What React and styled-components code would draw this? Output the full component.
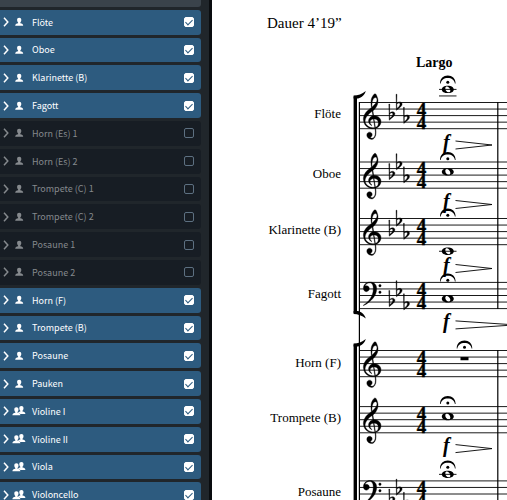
import React, { useState } from "react";
import styled, { createGlobalStyle } from "styled-components";

const PLAYERS = [
    { name: "Flöte", on: true },
    { name: "Oboe", on: true },
    { name: "Klarinette (B)", on: true },
    { name: "Fagott", on: true },
    { name: "Horn (Es) 1", on: false },
    { name: "Horn (Es) 2", on: false },
    { name: "Trompete (C) 1", on: false },
    { name: "Trompete (C) 2", on: false },
    { name: "Posaune 1", on: false },
    { name: "Posaune 2", on: false },
    { name: "Horn (F)", on: true },
    { name: "Trompete (B)", on: true },
    { name: "Posaune", on: true },
    { name: "Pauken", on: true },
    { name: "Violine I", on: true, section: true },
    { name: "Violine II", on: true, section: true },
    { name: "Viola", on: true, section: true },
    { name: "Violoncello", on: true, section: true },
];

// distance between two staff lines
const S = 6.55;

// top: first staff line, note: steps below it in staff spaces, space: room above the name
const STAVES = [
    { name: "Flöte", space: 31, top: 29.5, clef: "g", flats: true, note: -2, ledgers: [-2, -1], fermata: -27, dyn: 42.5 },
    { name: "Oboe", space: 40, top: 89, clef: "g", flats: true, note: 1.5, fermata: -10, dyn: 42.5 },
    { name: "Klarinette (B)", space: 36, top: 145.5, clef: "g", flats: true, note: 5, ledgers: [5], fermata: -10, dyn: 50 },
    { name: "Fagott", space: 44, top: 209.4, clef: "f", flats: true, note: 2.5, fermata: -9, dyn: 42.5, long: true },
    { name: "Horn (F)", space: 49, top: 277.5, clef: "g", rest: true, fermata: -10 },
    { name: "Trompete (B)", space: 35, top: 333.6, clef: "g", note: 1.5, fermata: -10.5, dyn: 42 },
    { name: "Posaune", space: 54, top: 407.9, clef: "f", flats: true, note: -1, ledgers: [-1], fermata: -20.5 },
];

const G_CLEF =
    "M441 -245c-23 -4 -48 -6 -76 -6c-59 0 -102 7 -130 20c-88 42 -150 93 -187 154c-26 44 -43 103 -48 176c-1 6 -1 13 -1 19c0 54 15 111 45 170c29 57 65 106 110 148s96 85 153 127c-3 16 -8 46 -13 92c-4 43 -5 73 -5 89c0 117 16 172 69 257c34 54 64 82 89 82c21 0 43 -30 69 -92s39 -115 41 -159v-15c0 -109 -21 -162 -67 -241c-20 -33 -61 -84 -125 -146L393 246C405 248 417 249 430 249C500 249 562 220 607 170C650 125 671 75 671 20C671 -100 590 -205 466 -238C474 -286 481 -333 483 -368C483 -458 470 -530 430 -590C402 -632 365 -658 323 -658C233 -658 130 -598 130 -493C130 -428 180 -381 235 -381C293 -381 335 -426 335 -481C335 -526 305 -566 260 -581C280 -603 305 -616 340 -616C415 -606 458 -501 458 -391C458 -356 452 -311 441 -245Z" +
    "M461 939c-95 0 -135 -175 -135 -286c0 -24 2 -48 5 -71c50 39 92 82 127 128c40 53 60 100 60 140v8c-4 53 -22 81 -55 81h-2z" +
    "M406 119l54 -326c73 25 110 78 110 161c0 7 0 15 -1 23c-7 95 -57 142 -151 142h-12z" +
    "M382 117c-72 -2 -128 -47 -128 -120v-7c2 -46 43 -99 75 -115c-3 -2 -7 -5 -10 -10c-70 33 -116 88 -123 172v11c0 68 44 126 88 159c23 17 49 29 78 36l-29 170c-21 -13 -52 -37 -92 -73c-50 -44 -86 -84 -109 -119c-45 -69 -67 -130 -67 -182v-5c5 -68 35 -127 93 -176s125 -73 203 -73c25 0 50 3 75 9c-19 111 -36 221 -54 323z";

const F_CLEF =
    "M252 262C400 262 507 170 507 10C507 -260 280 -500 12 -632C6 -635 -8 -630 -5 -618C190 -500 378 -280 378 0C378 140 335 232 240 232C150 232 75 180 60 100C80 115 100 120 118 120C180 120 226 72 226 15C226 -50 175 -103 110 -103C40 -103 0 -45 0 25C0 160 110 262 252 262Z" +
    "M585 125a47 47 0 1 0 94 0a47 47 0 1 0 -94 0zM585 -125a47 47 0 1 0 94 0a47 47 0 1 0 -94 0z";

const FLAT =
    "M-6 439H28L22 95C60 130 100 148 140 148C190 148 226 112 226 62C226 -15 110 -90 8 -175ZM26 55C45 85 72 104 102 104C130 104 146 85 146 55C146 0 85 -60 27 -105Z";

const Glyph = ({ d, x, y }) => (
    <path
        d={d}
        fillRule="evenodd"
        stroke="#000"
        strokeWidth="14"
        transform={`translate(${x} ${y}) scale(${S / 250} ${-S / 250})`}
    />
);

const Fermata = ({ x, y }) => (
    <g transform={`translate(${x} ${y})`}>
        <path d="M-7.8 8C-7.8 2.8 -4.3 0 0 0S7.8 2.8 7.8 8H7.1C6.6 4.4 3.8 2.4 0 2.4S-6.6 4.4 -7.1 8Z" />
        <circle cx="0" cy="6.8" r="1.5" />
    </g>
);

const WholeNote = ({ x, y }) => (
    <path
        fillRule="evenodd"
        transform={`translate(${x} ${y})`}
        d="M-6 0C-6 -2.2 -3.4 -3.7 0 -3.7S6 -2.2 6 0S3.4 3.7 0 3.7S-6 2.2 -6 0ZM-2.5 -1.2C-2.7 .9 -.9 2.9 .9 2.9C2.1 2.9 2.7 2 2.5 .8C2.2 -1 .6 -2.9 -1 -2.9C-1.9 -2.9 -2.4 -2.2 -2.5 -1.2Z"
    />
);

const Staff = ({ staff }) => {
    const { top, clef, flats, note, ledgers = [], rest, fermata, dyn, long } = staff;
    const shift = clef === "f" ? S : 0;
    return (
        <g>
            {[0, 1, 2, 3, 4].map((i) => (
                <StaffLine key={i} x1="14" x2="100%" y1={top + i * S} y2={top + i * S} />
            ))}
            {clef === "g" ? <Glyph d={G_CLEF} x={18.4} y={top + 3 * S} /> : <Glyph d={F_CLEF} x={18.4} y={top + S} />}
            {flats && (
                <>
                    <Glyph d={FLAT} x={44} y={top + 2 * S + shift} />
                    <Glyph d={FLAT} x={51.2} y={top + 0.5 * S + shift} />
                    <Glyph d={FLAT} x={58.6} y={top + 2.5 * S + shift} />
                </>
            )}
            <Meter x="76.5" y={top + 2 * S}>4</Meter>
            <Meter x="76.5" y={top + 4 * S}>4</Meter>
            {ledgers.map((l) => (
                <StaffLine key={l} x1="94" x2="111.5" y1={top + l * S} y2={top + l * S} />
            ))}
            {rest ? (
                <rect x="115.5" y={top + S} width="8" height="3.2" />
            ) : (
                <WholeNote x={102.8} y={top + note * S} />
            )}
            <Fermata x={rest ? 119.5 : 102.8} y={top + fermata} />
            {dyn && (
                <>
                    <Dynamic x="98" y={top + dyn + 3.5}>f</Dynamic>
                    <Hairpin d={`M110.5 ${top + dyn - 4}L${long ? 170 : 147} ${top + dyn}L110.5 ${top + dyn + 4}`} />
                </>
            )}
        </g>
    );
};

const Bracket = ({ from, to }) => (
    <g>
        <rect x="8.6" y={from} width="3.4" height={to - from} />
        <path d={`M8.6 ${from + 2}V${from - 1}C13 ${from - 1} 17 ${from - 2.5} 20.8 ${from - 5.5}C19 ${from} 15 ${from + 2} 12 ${from + 2}Z`} />
        <path d={`M8.6 ${to - 2}V${to + 1}C13 ${to + 1} 17 ${to + 2.5} 20.8 ${to + 5.5}C19 ${to} 15 ${to - 2} 12 ${to - 2}Z`} />
    </g>
);

const PersonShape = () => (
    <path d="M4 0C5.4 0 6.1 .9 6.1 2.2C6.1 3.3 5.6 4.1 5.1 4.7V5.4C6.8 5.9 8 6.2 8 8H0C0 6.2 1.2 5.9 2.9 5.4V4.7C2.4 4.1 1.9 3.3 1.9 2.2C1.9 .9 2.6 0 4 0Z" />
);

const PlayerIcon = ({ section }) =>
    section ? (
        <svg width="14" height="10" viewBox="0 0 14 10" fill="currentColor" aria-hidden="true">
            <g transform="translate(5.4 0)"><PersonShape /></g>
            <g transform="translate(.4 1.3)" stroke="#2d5b7f" strokeWidth=".6" paintOrder="stroke"><PersonShape /></g>
        </svg>
    ) : (
        <svg width="14" height="10" viewBox="0 0 14 10" fill="currentColor" aria-hidden="true">
            <g transform="translate(3.2 .8)"><PersonShape /></g>
        </svg>
    );

const Player = ({ player, id }) => {
    const [on, setOn] = useState(player.on);
    return (
        <PlayerRow $on={on}>
            <ExpandButton type="button" aria-label={player.name}>
                <svg width="6" height="10" viewBox="0 0 6 10" fill="none" stroke="currentColor" strokeWidth="1.5">
                    <path d="M1 .8L4.8 5L1 9.2" />
                </svg>
            </ExpandButton>
            <PlayerIcon section={player.section} />
            <PlayerName htmlFor={id}>{player.name}</PlayerName>
            <PlayerCheck id={id} type="checkbox" checked={on} onChange={() => setOn(!on)} />
        </PlayerRow>
    );
};

const App = () => {
    return (
        <Page>
            <GlobalStyle />
            <Sidebar>
                <PlayerList>
                    <ListHead />
                    {PLAYERS.map((player, i) => (
                        <Player key={player.name} player={player} id={`player-${i}`} />
                    ))}
                </PlayerList>
            </Sidebar>
            <Score>
                <Duration>Dauer 4’19”</Duration>
                <Tempo>Largo</Tempo>
                <System>
                    <Names>
                        {STAVES.map((staff) => (
                            <StaffName key={staff.name} $space={staff.space}>{staff.name}</StaffName>
                        ))}
                    </Names>
                    <Notation>
                        <Bracket from={23.5} to={240} />
                        <Bracket from={271.5} to={480} />
                        <BarLine x1="14.4" x2="14.4" y1="29" y2="480" />
                        <BarLine x1="152.8" x2="152.8" y1="29" y2="236" />
                        <BarLine x1="152.8" x2="152.8" y1="277" y2="480" />
                        {STAVES.map((staff) => (
                            <Staff key={staff.name} staff={staff} />
                        ))}
                    </Notation>
                </System>
            </Score>
        </Page>
    );
};

export default App;


const GlobalStyle = createGlobalStyle`
    * {
        box-sizing: border-box;
    }
    body {
        margin: 0;
        background: #fff;
    }
`;

const Page = styled.div`
    display: flex;
    height: 100vh;
    overflow: hidden;
`;

/* player list */
const Sidebar = styled.aside`
    display: flex;
    flex: none;
    width: 212px;
    padding-right: 8px;
    background: #20262b;
    border-right: 3px solid #090c0f;
`;

/* scrolled a little, so both ends run out of the window */
const PlayerList = styled.ul`
    display: flex;
    flex-direction: column;
    flex: 1;
    gap: 3px;
    list-style: none;
    margin: -18px 0 -7px;
    padding: 0;
`;

const ListHead = styled.li`
    flex: 1;
    border-radius: 0 3px 3px 0;
    background: #3a434b;
`;

const PlayerRow = styled.li`
    display: flex;
    align-items: center;
    flex: 1;
    min-height: 24px;
    padding: 0 7px 0 3px;
    border-radius: 0 3px 3px 0;
    background: ${(props) => (props.$on ? "#2d5b7f" : "#171d24")};
    color: ${(props) => (props.$on ? "#fff" : "#85898d")};
`;

const ExpandButton = styled.button`
    display: flex;
    margin-right: 3px;
    padding: 0;
    border: none;
    background: none;
    color: inherit;
    cursor: pointer;
`;

const PlayerName = styled.label`
    flex: 1;
    margin-left: 6px;
    padding-top: 1px;
    font-family: "Noto Sans CJK JP", "Noto Sans", sans-serif;
    font-size: 9px;
    line-height: 16px;
    white-space: nowrap;
`;

const PlayerCheck = styled.input`
    appearance: none;
    display: flex;
    justify-content: center;
    width: 10px;
    height: 10px;
    margin: 0;
    border: 1px solid #5d7081;
    border-radius: 2px;

    &:checked {
        border-color: #fff;
        background: #fff;
    }
    &:checked::after {
        content: "";
        width: 3px;
        height: 6px;
        border: solid #2d5b7f;
        border-width: 0 1px 1px 0;
        transform: rotate(45deg);
    }
`;

/* score page */
const Score = styled.main`
    flex: 1;
    min-width: 0;
    padding-top: 13px;
    background: #fff;
    color: #000;
    font-family: "Liberation Serif", "Times New Roman", serif;
`;

const Duration = styled.p`
    margin: 0 0 20px 55px;
    font-size: 15px;
    line-height: 20px;
`;

const Tempo = styled.h2`
    margin: 0 0 0 204px;
    font-size: 14px;
    line-height: 20px;
`;

const System = styled.section`
    display: grid;
    grid-template-columns: 133px 1fr;
`;

const Names = styled.div`
    padding-right: 4px;
    text-align: right;
`;

const StaffName = styled.div`
    margin-top: ${(props) => props.$space}px;
    font-size: 13px;
    line-height: 20px;
`;

const Notation = styled.svg`
    width: 100%;
    height: 480px;
`;

const StaffLine = styled.line`
    stroke: #000;
    stroke-width: 0.9;
`;

const BarLine = styled.line`
    stroke: #000;
    stroke-width: 1.2;
`;

const Meter = styled.text`
    font-size: 19px;
    font-weight: bold;
    text-anchor: middle;
    stroke: #000;
    stroke-width: 0.4;
`;

const Dynamic = styled.text`
    font-size: 20px;
    font-weight: bold;
    font-style: italic;
`;

const Hairpin = styled.path`
    fill: none;
    stroke: #000;
    stroke-width: 0.9;
`;
